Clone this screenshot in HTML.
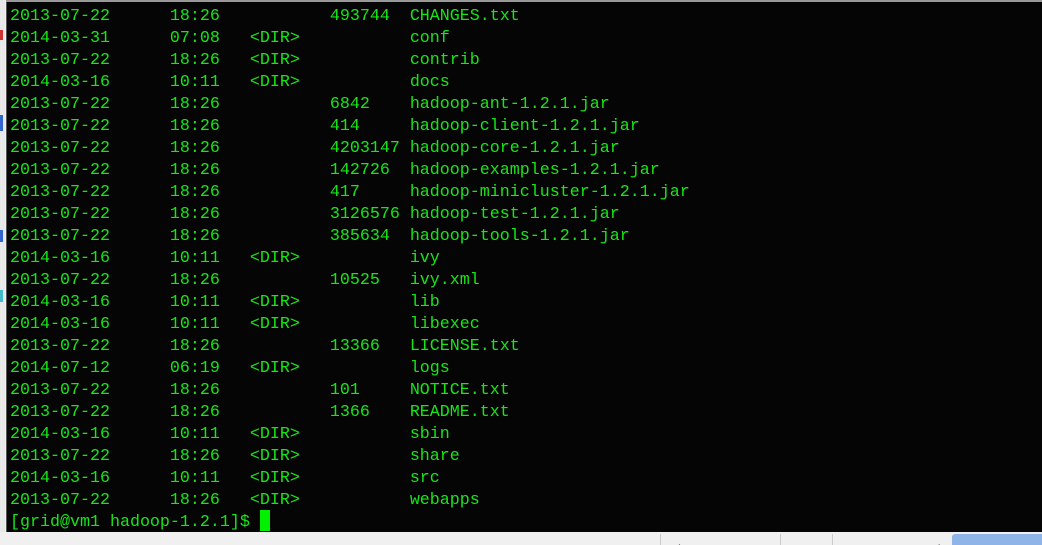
<!DOCTYPE html>
<html><head><meta charset="utf-8"><style>
body{margin:0;width:1042px;height:545px;overflow:hidden;background:#f0f0f0;position:relative;font-family:"Liberation Mono",monospace}
#strip{position:absolute;left:0;top:0;width:5px;height:545px;background:#e8e8e8}
#term{position:absolute;left:6px;top:2px;width:1036px;height:530px;background:#050505;border-left:1px solid #555}
#top{position:absolute;left:6px;top:0;width:1036px;height:2px;background:#999}
pre{margin:0;position:absolute;left:10px;top:6px;color:#16e616;font-size:16.67px;line-height:22px;font-family:"Liberation Mono",monospace}
#cur{position:absolute;left:260px;top:510px;width:10px;height:21px;background:#00f000}
#status{position:absolute;left:0;top:532px;width:1042px;height:13px;background:#f0f0f0;font:13px "Liberation Sans",sans-serif;color:#222;overflow:hidden}
.s{position:absolute;top:10px;white-space:nowrap}
.sep{position:absolute;top:2px;width:1px;height:11px;background:#ccc}
</style></head><body>
<div id="strip"><div style="position:absolute;top:30px;left:0;width:3px;height:10px;background:#c33"></div><div style="position:absolute;top:115px;left:0;width:3px;height:16px;background:#36c"></div><div style="position:absolute;top:230px;left:0;width:3px;height:12px;background:#36c"></div><div style="position:absolute;top:290px;left:0;width:3px;height:12px;background:#4bc"></div></div>
<div id="top"></div>
<div id="term"></div>
<pre>2013-07-22      18:26           493744  CHANGES.txt
2014-03-31      07:08   &lt;DIR&gt;           conf
2013-07-22      18:26   &lt;DIR&gt;           contrib
2014-03-16      10:11   &lt;DIR&gt;           docs
2013-07-22      18:26           6842    hadoop-ant-1.2.1.jar
2013-07-22      18:26           414     hadoop-client-1.2.1.jar
2013-07-22      18:26           4203147 hadoop-core-1.2.1.jar
2013-07-22      18:26           142726  hadoop-examples-1.2.1.jar
2013-07-22      18:26           417     hadoop-minicluster-1.2.1.jar
2013-07-22      18:26           3126576 hadoop-test-1.2.1.jar
2013-07-22      18:26           385634  hadoop-tools-1.2.1.jar
2014-03-16      10:11   &lt;DIR&gt;           ivy
2013-07-22      18:26           10525   ivy.xml
2014-03-16      10:11   &lt;DIR&gt;           lib
2014-03-16      10:11   &lt;DIR&gt;           libexec
2013-07-22      18:26           13366   LICENSE.txt
2014-07-12      06:19   &lt;DIR&gt;           logs
2013-07-22      18:26           101     NOTICE.txt
2013-07-22      18:26           1366    README.txt
2014-03-16      10:11   &lt;DIR&gt;           sbin
2013-07-22      18:26   &lt;DIR&gt;           share
2014-03-16      10:11   &lt;DIR&gt;           src
2013-07-22      18:26   &lt;DIR&gt;           webapps
[grid@vm1 hadoop-1.2.1]$</pre>
<div id="cur"></div>
<div id="status">
<div class="sep" style="left:660px"></div><span class="s" style="left:665px">ssh2: AES-256-CTR</span>
<div class="sep" style="left:780px"></div><span class="s" style="left:787px">24, 26</span>
<div class="sep" style="left:832px"></div><span class="s" style="left:838px">24 Rows, 107 Cols</span>
<div style="position:absolute;left:952px;top:2px;width:90px;height:11px;background:#8fb4e8;border-radius:3px 0 0 0"></div>
<span class="s" style="left:956px;color:#fff">VT100</span><span class="s" style="left:1012px;color:#aac">CAP</span>
</div>
</body></html>
